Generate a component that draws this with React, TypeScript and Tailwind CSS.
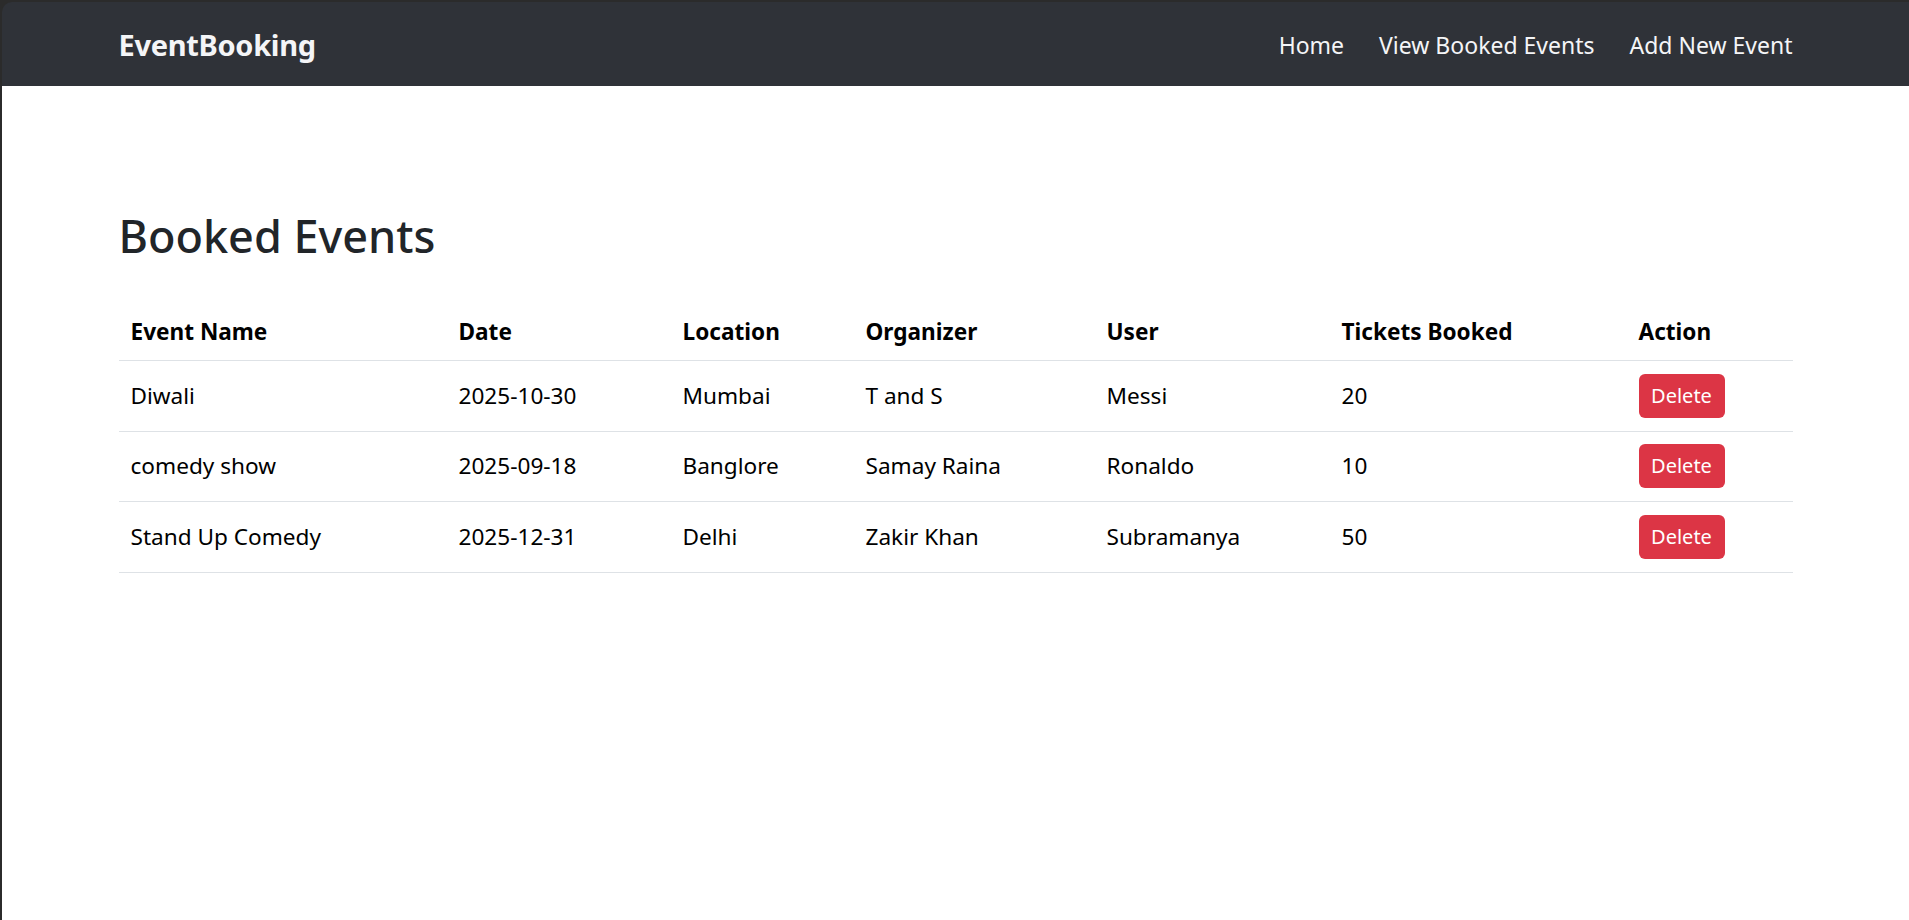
const bookings = [
  { name: 'Diwali', date: '2025-10-30', location: 'Mumbai', organizer: 'T and S', user: 'Messi', tickets: 20 },
  { name: 'comedy show', date: '2025-09-18', location: 'Banglore', organizer: 'Samay Raina', user: 'Ronaldo', tickets: 10 },
  { name: 'Stand Up Comedy', date: '2025-12-31', location: 'Delhi', organizer: 'Zakir Khan', user: 'Subramanya', tickets: 50 },
];

const columns = [
  { label: 'Event Name', width: 'w-[328px]' },
  { label: 'Date', width: 'w-[224px]' },
  { label: 'Location', width: 'w-[183px]' },
  { label: 'Organizer', width: 'w-[241px]' },
  { label: 'User', width: 'w-[235px]' },
  { label: 'Tickets Booked', width: 'w-[297px]' },
  { label: 'Action', width: 'w-[166px]' },
];

function Navbar() {
  return (
    <nav className="bg-[#2f3238] rounded-tl-[10px] h-[84px] flex items-center">
      <div className="w-[1674px] mx-auto flex items-center justify-between">
        <a href="#" className="text-[29px] font-bold text-[#f4f5f7] tracking-[-0.3px] mt-[2px]">EventBooking</a>
        <ul className="flex items-center gap-[35px] text-[23px] text-[#f4f5f7] mt-[2px]">
          <li><a href="#">Home</a></li>
          <li><a href="#">View Booked Events</a></li>
          <li><a href="#">Add New Event</a></li>
        </ul>
      </div>
    </nav>
  );
}

export default function App() {
  return (
    <div className="min-h-screen bg-[#2b2b2b] pt-[2px] pl-[2px] font-['Noto_Sans',sans-serif]">
      <Navbar />
      <main className="bg-white min-h-[834px]">
        <div className="w-[1674px] mx-auto pt-[123px]">
          <h2 className="text-[45px] font-medium text-[#212529] leading-[1.2] mb-[39px]">Booked Events</h2>
          <table className="w-full table-fixed border-collapse text-[22.6px] text-black">
            <thead>
              <tr className="border-b border-[#dee2e6]">
                {columns.map((c) => (
                  <th key={c.label} className={`${c.width} text-left font-bold px-3 pt-[12px] pb-[10px] leading-[36px]`}>
                    {c.label}
                  </th>
                ))}
              </tr>
            </thead>
            <tbody>
              {bookings.map((b) => (
                <tr key={b.name} className="border-b border-[#dee2e6] h-[70.5px]">
                  <td className="px-3 align-middle">{b.name}</td>
                  <td className="px-3 align-middle">{b.date}</td>
                  <td className="px-3 align-middle">{b.location}</td>
                  <td className="px-3 align-middle">{b.organizer}</td>
                  <td className="px-3 align-middle">{b.user}</td>
                  <td className="px-3 align-middle">{b.tickets}</td>
                  <td className="px-3 align-middle">
                    <button className="bg-[#dc3545] text-white text-[20px] rounded-[6px] w-[86px] h-[44px] leading-none">
                      Delete
                    </button>
                  </td>
                </tr>
              ))}
            </tbody>
          </table>
        </div>
      </main>
    </div>
  );
}
